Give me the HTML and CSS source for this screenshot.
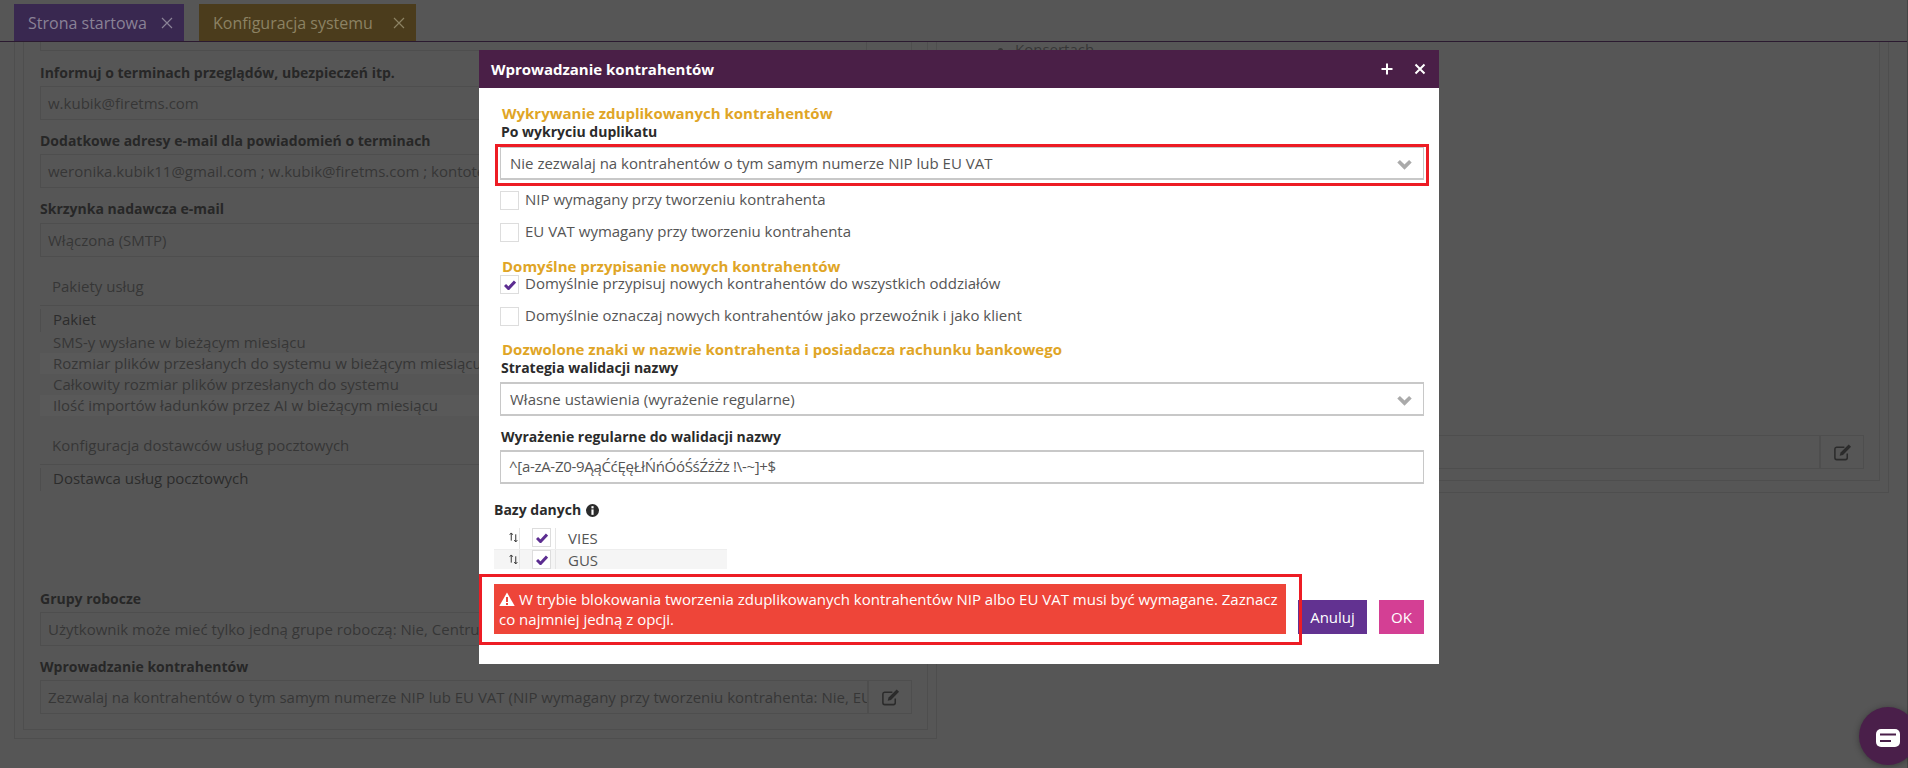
FILE: index.html
```html
<!DOCTYPE html>
<html lang="pl">
<head>
    <meta charset="UTF-8">
    <title>Konfiguracja systemu</title>
    <link rel="stylesheet" href="styles.css">
</head>
<body>
    <div class="page">
        <div class="tabs">
            <div class="tab tab-purple">Strona startowa <svg class="tab-x" viewBox="0 0 12 12"><path d="M1 1l10 10M11 1L1 11"/></svg></div>
            <div class="tab tab-gold">Konfiguracja systemu <svg class="tab-x" viewBox="0 0 12 12"><path d="M1 1l10 10M11 1L1 11"/></svg></div>
        </div>

        <div class="main">
            <div class="col-left">
                <div class="col-inner">
                    <div class="stub"><span class="stub-btn"></span></div>
                    <div class="bg-label first">Informuj o terminach przeglądów, ubezpieczeń itp.</div>
                    <div class="bg-field">w.kubik@firetms.com</div>
                    <div class="bg-label">Dodatkowe adresy e-mail dla powiadomień o terminach</div>
                    <div class="bg-field">weronika.kubik11@gmail.com ; w.kubik@firetms.com ; kontotestowe@firetms.com</div>
                    <div class="bg-label">Skrzynka nadawcza e-mail</div>
                    <div class="bg-field shift">Włączona (SMTP)</div>

                    <div class="panel-head">Pakiety usług</div>
                    <div class="grid-head">Pakiet</div>
                    <div class="grid-row">SMS-y wysłane w bieżącym miesiącu</div>
                    <div class="grid-row odd">Rozmiar plików przesłanych do systemu w bieżącym miesiącu</div>
                    <div class="grid-row">Całkowity rozmiar plików przesłanych do systemu</div>
                    <div class="grid-row odd">Ilość importów ładunków przez AI w bieżącym miesiącu</div>

                    <div class="panel-head">Konfiguracja dostawców usług pocztowych</div>
                    <div class="grid-head">Dostawca usług pocztowych</div>

                    <div class="bg-label groups">Grupy robocze</div>
                    <div class="bg-field">Użytkownik może mieć tylko jedną grupe roboczą: Nie, Centrum</div>
                    <div class="bg-label">Wprowadzanie kontrahentów</div>
                    <div class="bg-row">
                        <div class="bg-field grow">Zezwalaj na kontrahentów o tym samym numerze NIP lub EU VAT (NIP wymagany przy tworzeniu kontrahenta: Nie, EU VAT wymagany</div>
                        <span class="edit-btn">
                            <svg viewBox="0 0 20 20"><path d="M15 11v4.500a2 2 0 0 1-2 2H4a2 2 0 0 1-2-2V6.500a2 2 0 0 1 2-2h8"/><path class="pen" d="M16.500 1.500l2.500 2.500-8.500 8.500-3.500 1 1-3.500z"/></svg>
                        </span>
                    </div>
                </div>
            </div>

            <div class="col-right">
                <div class="col-inner right">
                    <ul class="bg-list"><li>Konsertach</li></ul>
                    <div class="bg-row right-field">
                        <div class="bg-field grow"></div>
                        <span class="edit-btn">
                            <svg viewBox="0 0 20 20"><path d="M15 11v4.500a2 2 0 0 1-2 2H4a2 2 0 0 1-2-2V6.500a2 2 0 0 1 2-2h8"/><path class="pen" d="M16.500 1.500l2.500 2.500-8.500 8.500-3.500 1 1-3.500z"/></svg>
                        </span>
                    </div>
                </div>
            </div>
        </div>
    </div>

    <div class="modal">
        <div class="modal-header">
            <span class="modal-title">Wprowadzanie kontrahentów</span>
            <svg class="head-icon plus" viewBox="0 0 12 12"><path d="M6 0.500v11M0.500 6h11"/></svg>
            <svg class="head-icon close" viewBox="0 0 12 12"><path d="M1.500 1.500l9 9M10.500 1.500l-9 9"/></svg>
        </div>
        <div class="modal-body">
            <div class="sec-title">Wykrywanie zduplikowanych kontrahentów</div>
            <div class="form-label">Po wykryciu duplikatu</div>
            <div class="select mt5">
                Nie zezwalaj na kontrahentów o tym samym numerze NIP lub EU VAT
                <svg class="chevron" viewBox="0 0 14 10"><path d="M1.500 2l5.500 5.500L12.500 2"/></svg>
                <span class="annot annot-select"></span>
            </div>
            <label class="check first-check"><span class="box"></span>NIP wymagany przy tworzeniu kontrahenta</label>
            <label class="check"><span class="box"></span>EU VAT wymagany przy tworzeniu kontrahenta</label>

            <div class="sec-title mt15">Domyślne przypisanie nowych kontrahentów</div>
            <label class="check no-gap"><span class="box"><svg viewBox="0 0 12 10"><path d="M1 5l3.500 3.500L11 1.500"/></svg></span>Domyślnie przypisuj nowych kontrahentów do wszystkich oddziałów</label>
            <label class="check"><span class="box"></span>Domyślnie oznaczaj nowych kontrahentów jako przewoźnik i jako klient</label>

            <div class="sec-title mt14">Dozwolone znaki w nazwie kontrahenta i posiadacza rachunku bankowego</div>
            <div class="form-label">Strategia walidacji nazwy</div>
            <div class="select tall mt4">
                Własne ustawienia (wyrażenie regularne)
                <svg class="chevron" viewBox="0 0 14 10"><path d="M1.500 2l5.500 5.500L12.500 2"/></svg>
            </div>
            <div class="form-label mt11">Wyrażenie regularne do walidacji nazwy</div>
            <div class="select tall mt3 regex">^[a-zA-Z0-9ĄąĆćĘęŁłŃńÓóŚśŹźŻż !\-~]+$</div>

            <div class="form-label db-label">Bazy danych
                <svg class="info" viewBox="0 0 12 12"><circle cx="6" cy="6" r="6"/><rect x="5" y="2" width="2" height="2"/><rect x="5" y="5" width="2" height="5"/></svg>
            </div>
            <div class="db-table">
                <div class="db-row">
                    <span class="db-sort"><svg viewBox="0 0 10 12"><path d="M2.500 10V2M0.800 3.500L2.500 1.500l1.700 2M7.500 3v8M5.800 9.500l1.700 2 1.700-2"/></svg></span>
                    <span class="db-check"><span class="box"><svg viewBox="0 0 12 10"><path d="M1 5l3.500 3.500L11 1.500"/></svg></span></span>
                    <span class="db-name">VIES</span>
                </div>
                <div class="db-row striped">
                    <span class="db-sort"><svg viewBox="0 0 10 12"><path d="M2.500 10V2M0.800 3.500L2.500 1.500l1.700 2M7.500 3v8M5.800 9.500l1.700 2 1.700-2"/></svg></span>
                    <span class="db-check"><span class="box"><svg viewBox="0 0 12 10"><path d="M1 5l3.500 3.500L11 1.500"/></svg></span></span>
                    <span class="db-name">GUS</span>
                </div>
            </div>

            <div class="modal-footer">
                <div class="error">
                    <svg class="warn" viewBox="0 0 16 14"><path class="warn-tri" d="M8 0.500L15.700 14H0.300z"/><rect x="7" y="5" width="2" height="5"/><rect x="7" y="11" width="2" height="2"/></svg>
                    W trybie blokowania tworzenia zduplikowanych kontrahentów NIP albo EU VAT musi być wymagane. Zaznacz co najmniej jedną z opcji.
                    <span class="annot annot-error"></span>
                </div>
                <button class="btn btn-cancel">Anuluj</button>
                <button class="btn btn-ok">OK</button>
            </div>
        </div>
    </div>

    <div class="chat">
        <svg viewBox="0 0 24 18"><rect width="24" height="18" rx="5"/><path d="M4 5.500h16M4 12h11"/></svg>
    </div>
</body>
</html>
```

FILE: styles.css
```css
* {
    box-sizing: border-box;
}
html, body {
    height: 100%;
}
body {
    margin: 0;
    overflow: hidden;
    background: #565656;
    font-family: "Open Sans", sans-serif;
    font-size: 15px;
    line-height: 20px;
    color: #363636;
}
.page {
    height: 768px;
    display: flex;
    flex-direction: column;
    border-right: 1px solid #454545;
    overflow: hidden;
}

/* tabs */
.tabs {
    flex: none;
    height: 42px;
    padding: 4px 0 0 14px;
    display: flex;
    gap: 15px;
    border-bottom: 1px solid #2b1a30;
}
.tab {
    height: 37px;
    padding: 0 11px 0 14px;
    display: flex;
    align-items: center;
    justify-content: space-between;
    font-size: 16px;
}
.tab-purple {
    width: 170px;
    background: #392850;
    color: #8a8296;
}
.tab-gold {
    width: 217px;
    background: #4b3c1c;
    color: #8c8263;
}
.tab-x {
    width: 12px;
    height: 12px;
    fill: none;
    stroke: currentColor;
    stroke-width: 1.2;
}

/* dimmed page behind the dialog */
.main {
    flex: 1;
    min-height: 0;
    display: flex;
    padding-left: 14px;
    overflow: hidden;
}
.col-left {
    flex: none;
    width: 923px;
    height: 697px;
    padding: 0 8px 8px 8px;
    border: 1px solid #4e4e4e;
    border-top: 0;
}
.col-right {
    flex: none;
    width: 952px;
    height: 451px;
    padding: 0 8px 8px 0;
    border-right: 1px solid #4e4e4e;
    border-bottom: 1px solid #4e4e4e;
}
.col-inner {
    height: 100%;
    padding: 0 15px 0 16px;
    border: 1px solid #4e4e4e;
    border-top: 0;
}
.col-inner.right {
    border-left: 0;
}
.stub {
    height: 9px;
    display: flex;
    justify-content: flex-end;
    border: 1px solid #4e4e4e;
    border-top: 0;
}
.stub-btn {
    width: 45px;
    border-left: 1px solid #4e4e4e;
}
.bg-label {
    margin-top: 11px;
    margin-bottom: 3px;
    font-size: 14px;
    font-weight: 700;
    color: #272727;
}
.bg-label.first {
    margin-top: 12px;
}
.bg-label.groups {
    margin-top: 98px;
}
.bg-field {
    height: 34px;
    padding: 0 8px 0 7px;
    border: 1px solid #4e4e4e;
    line-height: 32px;
    white-space: nowrap;
    overflow: hidden;
    color: #363636;
}
.bg-field.shift {
    margin-top: 4px;
}
.bg-row {
    display: flex;
}
.grow {
    flex: 1;
    min-width: 0;
}
.edit-btn {
    flex: none;
    width: 44px;
    height: 34px;
    display: flex;
    align-items: center;
    justify-content: center;
    border: 1px solid #4e4e4e;
}
.edit-btn svg {
    width: 19px;
    height: 19px;
    fill: none;
    stroke: #2b2b2b;
    stroke-width: 1.600;
}
.edit-btn .pen {
    fill: #2b2b2b;
    stroke: none;
}
.panel-head {
    height: 36px;
    margin-top: 13px;
    padding: 6px 0 0 12px;
    border-bottom: 1px solid #4e4e4e;
}
.grid-head {
    height: 26px;
    margin: 0;
    padding: 3px 0 0 13px;
    color: #2c2c2c;
    position: relative;
}
.grid-head::before {
    content: "";
    position: absolute;
    left: 0;
    top: 3px;
    bottom: 0;
    width: 1px;
    background: #4e4e4e;
}
.grid-row {
    height: 21px;
    padding-left: 13px;
    line-height: 21px;
}
.grid-row.odd {
    background: #595959;
}
.bg-list {
    margin: -3px 0 0;
    padding-left: 62px;
    list-style: disc;
}
.right-field {
    margin-top: 376px;
}

/* dialog */
.modal {
    position: absolute;
    left: 479px;
    top: 50px;
    width: 960px;
    height: 614px;
    background: #fff;
}
.modal-header {
    height: 38px;
    padding: 0 13px 0 12px;
    display: flex;
    align-items: center;
    background: #4a1f47;
    color: #fff;
}
.modal-title {
    flex: 1;
    font-size: 15px;
    font-weight: 700;
}
.head-icon {
    width: 12px;
    height: 12px;
    fill: none;
    stroke: #fff;
    stroke-width: 2;
}
.head-icon.plus {
    margin-right: 21px;
}
.modal-body {
    padding: 16px 15px 0 21px;
}
.sec-title {
    height: 18px;
    margin-left: 2px;
    font-size: 15px;
    line-height: 18px;
    font-weight: 700;
    color: #e0a526;
}
.form-label {
    height: 20px;
    margin-left: 1px;
    font-size: 14px;
    font-weight: 700;
    color: #2b2b2b;
}
.select {
    position: relative;
    height: 33px;
    padding-left: 9px;
    border: 1px solid #c8c8c8;
    border-bottom-width: 2px;
    line-height: 30px;
    color: #555;
}
.select.tall {
    height: 34px;
    border-width: 2px 1px;
}
.regex {
    padding-left: 8px;
    line-height: 28px;
    letter-spacing: -0.3px;
}
.chevron {
    position: absolute;
    right: 11px;
    top: 11px;
    width: 15px;
    height: 11px;
    fill: none;
    stroke: #aaa;
    stroke-width: 3.500;
}
.mt3 { margin-top: 3px; }
.mt4 { margin-top: 4px; }
.mt5 { margin-top: 5px; }
.mt11 { margin-top: 11px; }
.mt14 { margin-top: 14px; }
.mt15 { margin-top: 15px; }
.check {
    height: 19px;
    margin-top: 13px;
    display: flex;
    align-items: flex-start;
    gap: 6px;
    line-height: 17px;
    color: #555;
}
.first-check {
    margin-top: 11px;
}
.check.no-gap {
    margin-top: 0;
}
.box {
    flex: none;
    width: 19px;
    height: 19px;
    display: flex;
    align-items: center;
    justify-content: center;
    border: 1px solid #ddd;
    background: #fff;
}
.box svg {
    width: 12px;
    height: 10px;
    fill: none;
    stroke: #5c2d91;
    stroke-width: 3;
}
.db-label {
    margin: 16px 0 8px -6px;
}
.info {
    width: 13px;
    height: 13px;
    margin-left: 1px;
    vertical-align: -2px;
    fill: #2b2b2b;
}
.info rect {
    fill: #fff;
}
.db-table {
    width: 233px;
    margin-left: -6px;
}
.db-row {
    height: 21px;
    display: flex;
}
.db-row.striped {
    height: 20px;
    background: #f5f5f5;
    border-top: 1px solid #eee;
}
.db-sort {
    flex: none;
    width: 26px;
    padding: 3px 0 0 15px;
    border-right: 1px solid #e6e6e6;
}
.db-sort svg {
    display: block;
    width: 9px;
    height: 12px;
    fill: none;
    stroke: #333;
    stroke-width: 1.100;
}
.db-check {
    flex: none;
    width: 36px;
    padding-left: 12px;
    border-right: 1px solid #e6e6e6;
}
.db-name {
    padding-left: 12px;
    line-height: 20px;
    color: #555;
}
.modal-footer {
    height: 50px;
    margin-top: 15px;
    margin-left: -6px;
    display: flex;
    align-items: flex-end;
}
.error {
    position: relative;
    width: 792px;
    height: 50px;
    margin-right: 12px;
    padding: 5px;
    background: #ee4539;
    color: #fff;
}
.warn {
    width: 16px;
    height: 14px;
    vertical-align: -1px;
    fill: #ee4539;
}
.warn .warn-tri {
    fill: #fff;
}
.btn {
    height: 34px;
    padding: 0;
    border: none;
    font-family: inherit;
    font-size: 15px;
    color: #fff;
}
.btn-cancel {
    width: 69px;
    margin-right: 12px;
    background: #623291;
}
.btn-ok {
    width: 45px;
    background: #d43f94;
}

/* red markers put on the screenshot */
.annot {
    position: absolute;
    border: 3px solid #ed1c24;
    pointer-events: none;
}
.annot-select {
    top: -4px;
    left: -6px;
    right: -6px;
    bottom: -8px;
}
.annot-error {
    top: -10px;
    left: -15px;
    right: -16px;
    bottom: -11px;
    z-index: 1;
}

/* chat launcher */
.chat {
    position: absolute;
    left: 1859px;
    top: 707px;
    width: 58px;
    height: 58px;
    padding: 22px 0 0 17px;
    border-radius: 50%;
    background: #4a1f4a;
    box-shadow: 0 1px 6px rgba(0, 0, 0, 0.35);
}
.chat svg {
    display: block;
    width: 24px;
    height: 18px;
    fill: #fff;
    stroke: none;
}
.chat svg path {
    fill: none;
    stroke: #4a1f4a;
    stroke-width: 2;
}
```
